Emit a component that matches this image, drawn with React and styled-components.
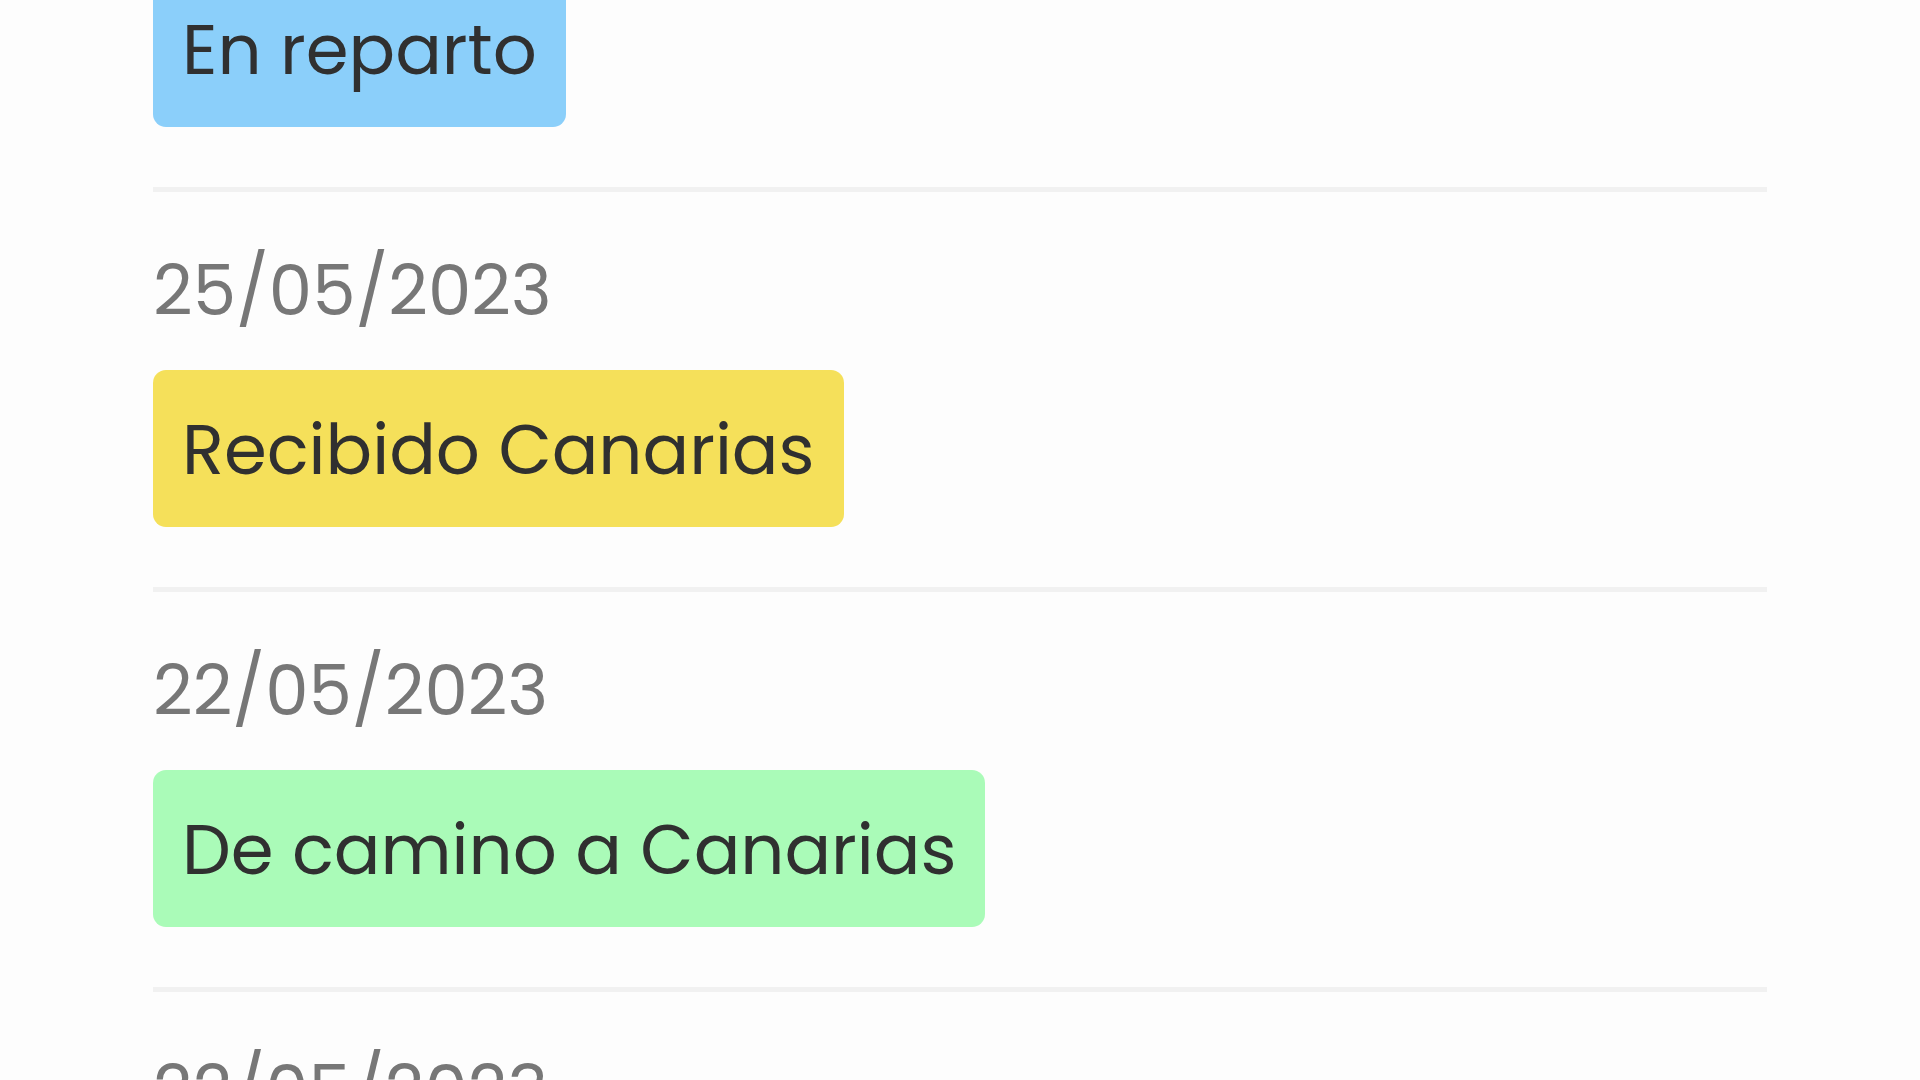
import React from 'react';
import styled, { createGlobalStyle } from 'styled-components';

const Global = createGlobalStyle`
    html, body {
        margin: 0;
        padding: 0;
        background: #fdfdfd;
        overflow: hidden;
    }
    body {
        font-family: "Poppins", "Open Sans", "Noto Sans", sans-serif;
    }
`;

const history = [
    { date: '28/05/2023', status: 'En reparto', tone: 'blue' },
    { date: '25/05/2023', status: 'Recibido Canarias', tone: 'yellow' },
    { date: '22/05/2023', status: 'De camino a Canarias', tone: 'green' },
    { date: '22/05/2023', status: 'Pedido confirmado', tone: 'blue' },
];

const tones = {
    blue: '#8bcffa',
    yellow: '#f5e05a',
    green: '#aafbb8',
};

const Tracking = () => {
    return (
        <React.Fragment>
            <Global />
            <Page>
                <List>
                    {history.map((h, i) => (
                        <Item key={i}>
                            <DateText>{h.date}</DateText>
                            <Status tone={h.tone}>{h.status}</Status>
                        </Item>
                    ))}
                </List>
            </Page>
        </React.Fragment>
    );
}

const Page = styled.div`
    height: 1080px;
    overflow: hidden;
    padding: 0 153px;
`;

// scrolled list: first entry's date is above the fold
const List = styled.div`
    display: flex;
    flex-direction: column;
    margin-top: -208px;
`;

const Item = styled.div`
    display: flex;
    flex-direction: column;
    align-items: flex-start;
    padding: 57px 0 60px;
    border-bottom: 5px solid #f1f1f1;
`;

const DateText = styled.div`
    font-size: 69px;
    line-height: 84px;
    color: #777777;
    margin-bottom: 37px;
`;

const Status = styled.div`
    font-size: 69px;
    line-height: 84px;
    color: #303030;
    background: ${p => tones[p.tone]};
    border-radius: 13px;
    padding: 38px 29px 35px 29px;
`;

export default Tracking;
